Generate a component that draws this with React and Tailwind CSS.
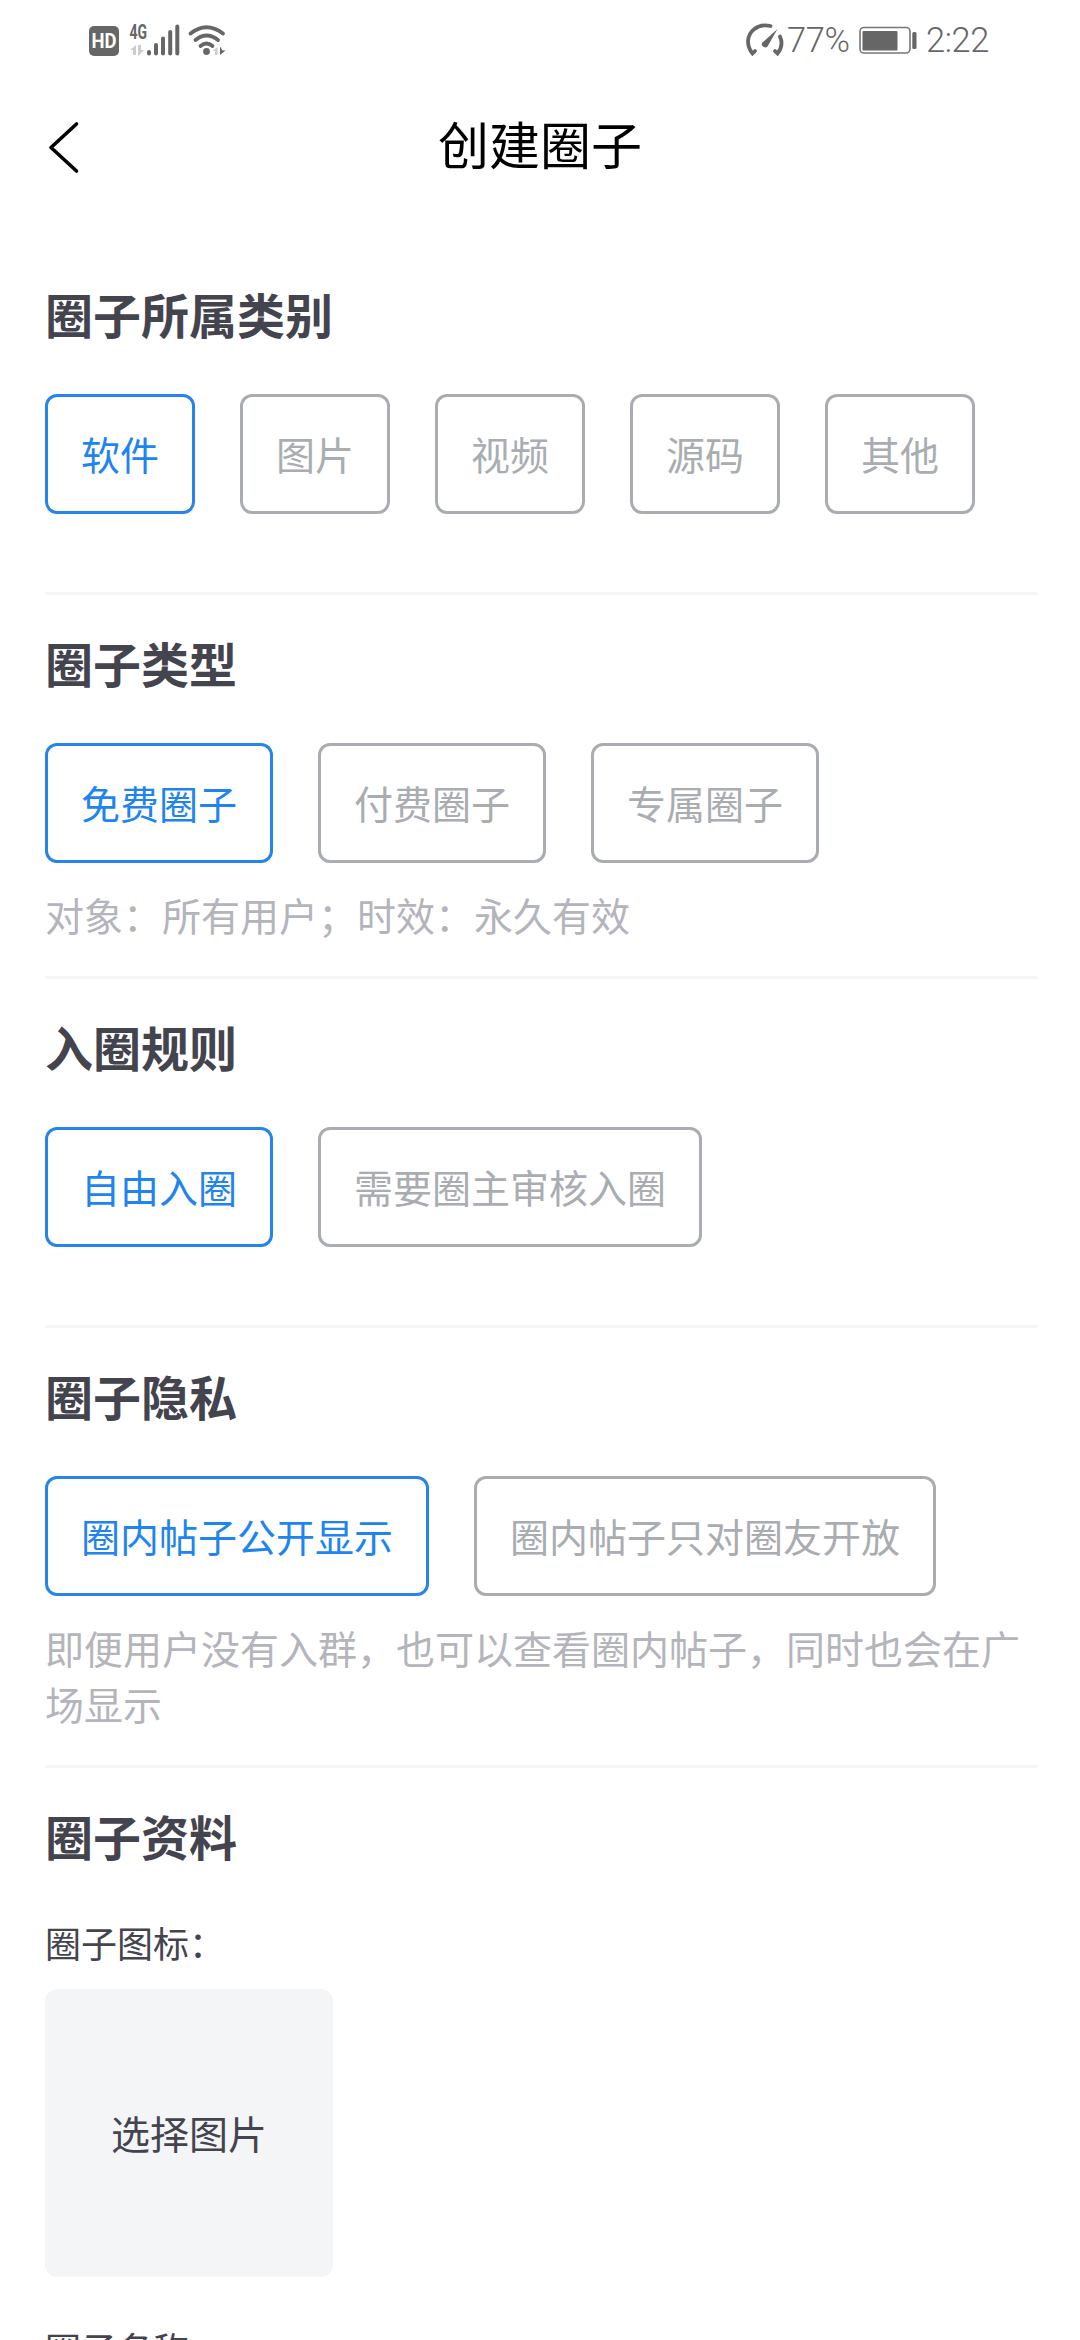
import { useState } from "react";

const sections = [
  {
    title: "圈子所属类别",
    options: ["软件", "图片", "视频", "源码", "其他"],
    height: "h-[349px]",
  },
  {
    title: "圈子类型",
    options: ["免费圈子", "付费圈子", "专属圈子"],
    hint: "对象：所有用户；时效：永久有效",
    height: "h-[384px]",
  },
  {
    title: "入圈规则",
    options: ["自由入圈", "需要圈主审核入圈"],
    height: "h-[349px]",
  },
  {
    title: "圈子隐私",
    options: ["圈内帖子公开显示", "圈内帖子只对圈友开放"],
    hint: "即便用户没有入群，也可以查看圈内帖子，同时也会在广场显示",
    height: "h-[440px]",
  },
];

function SignalIcons() {
  return (
    <svg width="142" height="80" viewBox="88 0 142 80" fill="none">
      <rect x="89" y="26" width="30" height="30" rx="5" fill="#666" />
      <text x="91.5" y="47.8" textLength="25" lengthAdjust="spacingAndGlyphs" fontSize="19.5" fontWeight="700" fill="#fff">HD</text>
      <text x="129.5" y="38.8" textLength="17.5" lengthAdjust="spacingAndGlyphs" fontSize="19.5" fontWeight="700" fill="#666">4G</text>
      <path d="M130 50l6-5v10h-3v-5zM138 45h3v5h3l-6 6z" fill="#ccc" />
      <path d="M149 52v1.5M156 45v8.5M163 38.5v15M170.2 32v21.5M177.3 26.5v27" stroke="#666" strokeWidth="4" strokeLinecap="round" />
      <path d="M190.5 33.5q16-12.5 32.5 0M195.5 40q11-9 22.500 0M200.5 46q6-5 12 0" stroke="#666" strokeWidth="3.8" strokeLinecap="round" />
      <circle cx="206.5" cy="51.5" r="3.4" fill="#666" />
      <path d="M212.5 51l5-4v8h-2.5v-4z" fill="#ccc" />
      <path d="M220 46.5v8.5l5.5-4.5h-3z" fill="#666" />
    </svg>
  );
}

function GaugeIcon() {
  return (
    <svg width="40" height="80" viewBox="745 0 40 80" fill="none" stroke="#666" strokeLinecap="round">
      <path d="M770.5 26C757 23 748.5 32 748 41q0 7 4.5 12.5l2.5-2.5" strokeWidth="3.8" />
      <path d="M780 36.5q4 9-2.5 17l-2.5-2.5" strokeWidth="3.8" />
      <path d="M777.5 29l-15.5 14a3.4 3.4 0 0 0 5.500 3.5z" fill="#666" stroke="none" />
    </svg>
  );
}

function BatteryIcon() {
  return (
    <svg width="60" height="80" viewBox="858 0 60 80" fill="none">
      <rect x="860" y="27.5" width="50" height="25.5" rx="4" stroke="#777" strokeWidth="1.6" />
      <rect x="862.5" y="31" width="35" height="19.5" rx="1" fill="#666" />
      <rect x="912.3" y="32" width="4.2" height="17" rx="1.5" fill="#666" />
    </svg>
  );
}

function StatusBar() {
  return (
    <div className="flex h-[80px] items-center justify-between pl-[88px] pr-[87px] font-[Roboto,sans-serif] text-[#666]">
      <SignalIcons />
      <div className="flex items-center text-[34.5px] font-light tracking-[-0.4px]">
        <GaugeIcon />
        <span className="ml-[2px] w-[71px] pt-[2px]">77%</span>
        <BatteryIcon />
        <span className="ml-[8px] w-[67px] pt-[2px]">2:22</span>
      </div>
    </div>
  );
}

function Header() {
  return (
    <header className="grid h-[126px] grid-cols-[1fr_auto_1fr] items-center px-[45px]">
      <button aria-label="返回" className="w-[40px]">
        <svg width="40" height="126" viewBox="45 80 40 126" fill="none">
          <path d="M76.5 124L51 147.500l25.5 23.5" stroke="#000" strokeWidth="3.6" strokeLinecap="round" strokeLinejoin="round" />
        </svg>
      </button>
      <h1 className="pt-[1px] text-[51px] text-black">创建圈子</h1>
    </header>
  );
}

function Section({ title, options, hint, height }) {
  const [selected, setSelected] = useState(0);

  return (
    <section className={`${height} border-b-[3px] border-[#f5f6f7] pt-[31px]`}>
      <h2 className="text-[48px] leading-[72px] font-bold text-[#44444f]">{title}</h2>
      <div className="mt-[45px] flex gap-[45px]">
        {options.map((label, i) => (
          <button
            key={label}
            onClick={() => setSelected(i)}
            className={`h-[120px] rounded-[12px] border-[3px] px-[33px] pb-[1px] text-[39px] ${
              i === selected ? "border-[#2684ea] text-[#1e84f0]" : "border-[#a9adb2] text-[#a9adb2]"
            }`}
          >
            {label}
          </button>
        ))}
      </div>
      {hint && <p className="mt-[23px] text-[39px] leading-[56px] text-[#b4b4bc]">{hint}</p>}
    </section>
  );
}

export default function App() {
  return (
    <div className="h-[2340px] w-[1080px] overflow-hidden bg-white font-['Noto_Sans_CJK_SC',sans-serif]">
      <StatusBar />
      <Header />
      <main className="mt-[40px] pl-[45px] pr-[42px]">
        {sections.map((s) => (
          <Section key={s.title} {...s} />
        ))}
        <section className="pt-[31px] text-[#44444f]">
          <h2 className="text-[48px] leading-[72px] font-bold">圈子资料</h2>
          <p className="mt-[44px] text-[36px] leading-[54px]">圈子图标：</p>
          <button className="mt-[20px] flex h-[288px] w-[288px] items-center justify-center rounded-[12px] bg-[#f4f5f7] pb-[2px] text-[39px]">
            选择图片
          </button>
          <p className="mt-[44px] text-[36px] leading-[54px]">圈子名称：</p>
        </section>
      </main>
    </div>
  );
}
